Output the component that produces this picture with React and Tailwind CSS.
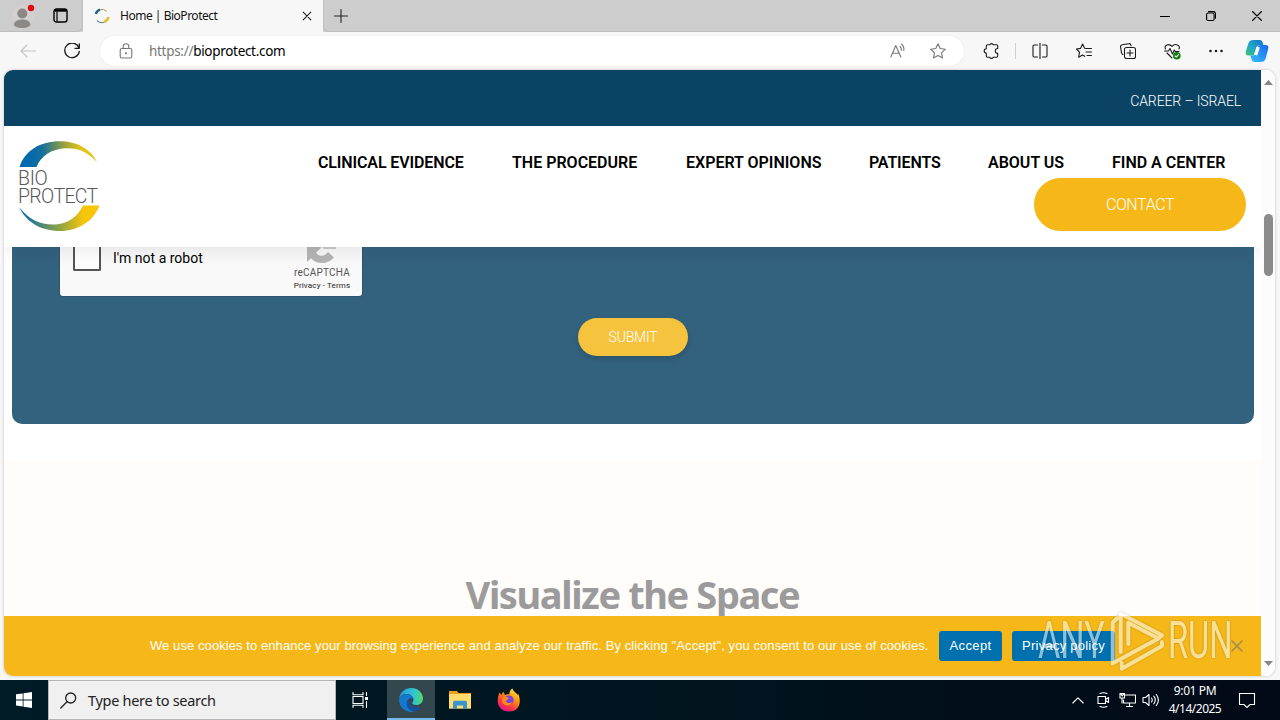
import React from 'react'

const NAV_ITEMS = [
  { label: 'CLINICAL EVIDENCE', className: 'w-[146px] tracking-[-0.12px]' },
  { label: 'THE PROCEDURE', className: 'w-[126px] tracking-[0px]' },
  { label: 'EXPERT OPINIONS', className: 'w-[135px] tracking-[0px]' },
  { label: 'PATIENTS', className: 'w-[71px] tracking-[-0.15px]' },
  { label: 'ABOUT US', className: 'w-[76px] tracking-[0px]' },
  { label: 'FIND A CENTER', className: 'w-[113px] tracking-[0px]' },
]

function Icon({ children, className, box = '0 0 16 16' }) {
  return (
    <svg className={`block flex-shrink-0 ${className}`} viewBox={box} fill="none" stroke="currentColor" strokeWidth={1.1} strokeLinecap="round" strokeLinejoin="round">
      {children}
    </svg>
  )
}

function TabStrip() {
  return (
    <div className="flex h-8 flex-shrink-0 bg-[#cdcdcd]">
      <div className="flex w-[83px] items-center rounded-br-md border-b border-r border-[#bdbdbd] pl-3">
        <svg className="block h-7 w-6" viewBox="0 0 24 28">
          <circle cx="11" cy="14" r="11" fill="#d3d0cf" />
          <circle cx="10.300" cy="11.500" r="5" fill="#8c8886" />
          <path d="M2 22.500c0-3.500 4-5 8.300-5s8 1.500 8 5c0 2-3.500 3.500-8 3.500s-8.300-1.500-8.300-3.500z" fill="#8c8886" />
          <circle cx="19" cy="6" r="3.200" fill="#e30613" />
        </svg>
        <Icon className="ml-[17px] h-[15px] w-[15px] text-black" box="0 0 15 15">
          <rect x="1" y="1" width="13" height="13" rx="2.500" strokeWidth={1.400} />
          <path d="M1.500 2.500h12" strokeWidth={2.400} strokeLinecap="butt" />
          <path d="M4 3.500v10" strokeWidth={1.200} strokeLinecap="butt" />
        </Icon>
      </div>
      <div className="flex w-60 items-center bg-[#f7f7f7] pl-[11px]">
        <svg className="block h-4 w-4" viewBox="0 0 16 16" fill="none" strokeLinecap="butt">
          <path d="M1.800 6A6.500 6.500 0 0 1 6 1.700" stroke="#24618c" strokeWidth="2.400" />
          <path d="M6 1.700A6.500 6.500 0 0 1 12.500 3.200" stroke="#9a9f42" strokeWidth="1" />
          <path d="M14.500 9a6.500 6.500 0 0 1-4.500 5" stroke="#dcc52c" strokeWidth="2.600" />
          <path d="M10 14.300a6.500 6.500 0 0 1-7-2" stroke="#69918b" strokeWidth="1.200" />
        </svg>
        <span className="ml-[10px] w-[182px] whitespace-nowrap text-[12px] leading-4 tracking-[-0.48px] text-[#111]">Home | BioProtect</span>
        <Icon className="h-[10px] w-[10px] text-[#222]" box="0 0 10 10">
          <path d="M1.200 1.200l7.600 7.600M8.800 1.200l-7.600 7.600" />
        </Icon>
      </div>
      <div className="flex flex-1 items-center rounded-bl-md border-b border-l border-[#bdbdbd] pl-[10px]">
        <Icon className="h-[14px] w-[14px] text-[#222]" box="0 0 14 14"><path d="M7 .5v13M.5 7h13" /></Icon>
      </div>
      <div className="flex items-center gap-[36px] border-b border-[#bdbdbd] pr-[18px] text-black">
        <Icon className="h-[10px] w-[10px]" box="0 0 10 10"><path d="M0 5.500h10" /></Icon>
        <Icon className="h-[10px] w-[10px]" box="0 0 10 10">
          <rect x=".6" y="2" width="7.500" height="7.500" rx="1.500" />
          <path d="M2.500.6h4.800a2.200 2.200 0 0 1 2.200 2.200v4.500" />
        </Icon>
        <Icon className="h-[10px] w-[10px]" box="0 0 10 10"><path d="M.5.5l9 9M9.500.5l-9 9" /></Icon>
      </div>
    </div>
  )
}

function Toolbar() {
  return (
    <div className="flex h-[38px] flex-shrink-0 items-center bg-[#f7f7f7] pl-5 text-[#1b1b1b]">
      <Icon className="h-4 w-4 text-[#c4c4c4]"><path d="M15.500 8H1M7 2L1 8l6 6" /></Icon>
      <Icon className="ml-7 h-4 w-4"><path d="M15 5A7.300 7.300 0 1 0 15.300 8.500M15.300.8v4.500h-4.300" strokeWidth={1.300} /></Icon>
      <div className="ml-[20px] flex h-[30px] w-[864px] items-center rounded-full bg-white pl-[19px] text-[#767676] shadow-[0_0_2px_#e4e4e4]">
        <Icon className="h-4 w-[14px]" box="0 0 14 16">
          <rect x="1.200" y="5.500" width="11.600" height="9.500" rx="1.800" />
          <path d="M4.200 5.500V3.500a2.800 2.800 0 0 1 5.600 0v2" />
          <circle cx="7" cy="10.200" r=".5" fill="currentColor" />
        </Icon>
        <span className="ml-4 flex-1 whitespace-nowrap text-[13.500px] leading-5 tracking-[-0.3px]">
          https://<span className="text-black">bioprotect.com</span>
        </span>
        <Icon className="mr-6 h-4 w-4">
          <path d="M.8 14L5.800 2.500 10.800 14M2.500 10.200h6.600M10 3.500a4 4 0 0 1 1.200 4M11.500 1a7 7 0 0 1 2.300 6.500" />
        </Icon>
        <Icon className="mr-[18px] h-4 w-4">
          <path d="M8 .8l2.200 4.700 5.100.7-3.700 3.600.9 5.200L8 12.500 3.500 15l.9-5.200L.7 6.200l5.100-.7z" />
        </Icon>
      </div>
      {/* puzzle piece: sockets on the right, knob on the left */}
      <Icon className="ml-[19px] h-4 w-4">
        <path d="M4.500 1.800h2.300a1.800 1.800 0 0 1 3.400 0h3.300c.7 0 1.200.5 1.200 1.200v2.500a2.200 2.200 0 0 0 0 4.800V13c0 .7-.5 1.200-1.200 1.200h-3.300a1.800 1.800 0 0 1-3.400 0H4.500c-.7 0-1.200-.5-1.200-1.200v-3a2 2 0 0 1 0-4.200V3c0-.7.5-1.200 1.200-1.200z" />
      </Icon>
      <div className="ml-[16px] h-4 w-px bg-[#cfcfcf]" />
      <Icon className="ml-4 h-4 w-4"><path d="M8 0v16M5.500 2H2.200C1.500 2 1 2.500 1 3.200v9.600c0 .7.500 1.200 1.200 1.200h3.300M10.500 2h3.300c.7 0 1.200.5 1.200 1.200v9.600c0 .7-.5 1.200-1.200 1.200h-3.300" /></Icon>
      <Icon className="ml-7 h-4 w-4"><path d="M9.500 5.500h6M10 9h5.500M11 12.500h4.500M8.600 5.300L6.600 1 4.500 5.400l-4 .6 3 3.200-.8 5L6.500 12l2.200 1.300" /></Icon>
      <Icon className="ml-7 h-4 w-4">
        <rect x="4.500" y="4.500" width="11" height="11" rx="2" />
        <path d="M10 7v6M7 10h6M3 11.500A2 2 0 0 1 1.500 9.800L.6 4a2 2 0 0 1 1.600-2.300l6.500-1A2 2 0 0 1 11 2.300v.5" />
      </Icon>
      <Icon className="ml-7 h-[17px] w-[17px]" box="0 0 17 17">
        <path d="M1.500 6C-.5 2 5 0 8 3.300 11 0 17 2 15 6M.5 8h4l1.500-2.500L8.500 11l1.800-4 1 1.500H15M3 10l5 5" />
        <circle cx="12.800" cy="12.800" r="3.800" fill="#107c10" stroke="none" />
        <path d="M11.200 13l1.200 1 2-2.300" stroke="white" />
      </Icon>
      <Icon className="ml-[27px] h-4 w-4"><path d="M2.500 8h.01M8 8h.01M13.500 8h.01" strokeWidth={2.600} /></Icon>
      <svg className="ml-[21px] block h-6 w-6 flex-shrink-0" viewBox="0 0 24 24">
        <defs>
          <linearGradient id="copL" x1="0" y1="1" x2="1" y2="0"><stop offset="0" stopColor="#3fc46c" /><stop offset=".45" stopColor="#22a6c9" /><stop offset="1" stopColor="#1473c9" /></linearGradient>
          <linearGradient id="copR" x1="0" y1="1" x2="1" y2="0"><stop offset="0" stopColor="#38bfff" /><stop offset="1" stopColor="#1668ec" /></linearGradient>
        </defs>
        <path d="M8.500 1h6c2 0 2.800 1.200 3.300 3l.6 2h-3c-2 0-3 1-3.600 3l-1.500 5c-.5 1.700-1.300 2.500-3 2.500H3.500C1 16.500.1 15 .9 12.300L3.500 4C4.200 1.900 5.800 1 8.500 1z" fill="url(#copL)" />
        <path d="M15.500 23h-6c-2 0-2.600-1.300-3.200-3.200l-1-3.300h2.500c2 0 2.500-1.200 3-2.800L12.300 9c.7-2.200 1.700-3 3.200-3h5c2.500 0 3.400 1.600 2.600 4.200L20.500 20c-.7 2-2.300 3-5 3z" fill="url(#copR)" />
        <path d="M13.200 8L10.600 16" stroke="#fff" strokeWidth="3.400" />
      </svg>
    </div>
  )
}

function Logo() {
  return (
    <div className="flex h-[91px] w-[82px] flex-shrink-0 flex-col text-[#58595b]">
      <svg className="block h-[26px] w-[82px] flex-shrink-0" viewBox="0 0 82 26">
        <defs>
          <linearGradient id="arcTop"><stop offset=".1" stopColor="#0069b0" /><stop offset=".3" stopColor="#16709a" /><stop offset=".6" stopColor="#a6a436" /><stop offset=".8" stopColor="#e3c51a" /></linearGradient>
          <linearGradient id="arcBottom"><stop offset="0" stopColor="#0069b0" /><stop offset=".5" stopColor="#8ca345" /><stop offset=".8" stopColor="#f9c50a" /></linearGradient>
        </defs>
        <path d="M1.500 26C7 9.500 22 .3 42 .3c17 0 31 7.500 37 21C69 10.500 60 6.800 48 7.300 33 8 23 15 18.500 26z" fill="url(#arcTop)" />
      </svg>
      <span className="mt-[3px] h-[18px] whitespace-nowrap font-[Roboto] text-[19.500px] font-light leading-[18px] tracking-[-0.3px]">BIO</span>
      <span className="h-[18px] whitespace-nowrap font-[Roboto] text-[19.500px] font-light leading-[17px] tracking-[-0.65px]">PROTECT</span>
      <svg className="block h-[27px] w-[82px] flex-shrink-0" viewBox="0 0 82 27">
        <path d="M1.500 2.500C11 15 24 20.500 38 19.500 51 18.500 60 11 65 .5h16.500C76 16 60 26 42 26 23 26 8 17 1.500 2.500z" fill="url(#arcBottom)" />
      </svg>
    </div>
  )
}

function SiteHeader() {
  return (
    <header className="relative z-10 flex h-[121px] flex-shrink-0 justify-between bg-white pl-[14px] pr-[15px] pt-[15px] font-[Roboto] shadow-[0_2px_20px_rgba(0,0,0,0.1)]">
      <Logo />
      <div className="flex flex-col items-end">
        <nav className="flex gap-12 pr-[21px] pt-[10px]">
          {NAV_ITEMS.map(item => (
            <a key={item.label} className={`whitespace-nowrap text-[16px] font-semibold leading-6 text-black ${item.className}`}>{item.label}</a>
          ))}
        </nav>
        <button className="mt-[3px] flex h-[53px] w-[212px] items-center justify-center rounded-full bg-[#f5b818] text-[16px] font-light tracking-[-0.4px] text-white">CONTACT</button>
      </div>
    </header>
  )
}

function Captcha() {
  return (
    <div className="ml-12 flex h-[49px] w-[302px] overflow-hidden rounded-b-[3px] bg-[#f9f9f9] pl-[13px] font-[Roboto] text-black shadow-[0_0_2px_rgba(0,0,0,0.4)]">
      <div className="h-6 w-7 rounded-b-[2px] border-x-2 border-b-2 border-[#555] bg-white" />
      <span className="ml-3 mt-[1px] flex-1 text-[14px] leading-5 tracking-[0px]">I'm not a robot</span>
      <div className="flex w-[80px] flex-col items-center text-[#555]">
        <svg className="block h-4 w-8 flex-shrink-0" viewBox="0 0 32 16">
          <path d="M1 0v15l4-3.800C8 14.500 12 16 16 16c5 0 9-2 12-5.500L22 5c-2 3-5 4.300-8 3.500-2-.5-3-1.500-4-3L15 1V0z" fill="#b5b5b5" />
          <path d="M16 0h14v2H18z" fill="#c9c9c9" />
        </svg>
        <span className="mt-[4px] whitespace-nowrap text-[10px] leading-3 tracking-[0.2px]">reCAPTCHA</span>
        <span className="whitespace-nowrap text-[8px] leading-[13px] tracking-[0.15px] text-[#222]">Privacy - Terms</span>
      </div>
    </div>
  )
}

function CookieBar() {
  return (
    <div className="flex h-[60px] flex-shrink-0 items-center bg-[#f6b819] pl-[146px] font-['Liberation_Sans'] text-[13px] text-white">
      <span className="w-[789px] flex-shrink-0 whitespace-nowrap tracking-[0.078px]">
        We use cookies to enhance your browsing experience and analyze our traffic. By clicking "Accept", you consent to our use of cookies.
      </span>
      <button className="h-[30px] w-[63px] flex-shrink-0 rounded-[3px] bg-[#0071ae] tracking-[0.4px]">Accept</button>
      <button className="ml-[10px] h-[30px] w-[103px] flex-shrink-0 rounded-[3px] bg-[#0071ae] tracking-[0.25px]">Privacy policy</button>
      <Icon className="ml-[116px] h-3 w-3 text-[#a18b53]" box="0 0 12 12"><path d="M1 1l10 10M11 1L1 11" strokeWidth={1.600} /></Icon>
    </div>
  )
}

function Watermark() {
  return (
    <div className="absolute left-[1034px] top-[605px] h-[70px] w-[200px] font-[Roboto] text-white opacity-55 drop-shadow-[0_0_1px_rgba(0,0,0,0.4)]">
      <span className="absolute left-[4px] top-[10px] origin-left scale-x-[0.67] text-[51px] leading-[52px]">ANY</span>
      <svg className="absolute left-[74px] top-[1px] h-[68px] w-[58px]" viewBox="0 0 58 68" fill="none" stroke="currentColor" strokeWidth="4" strokeLinejoin="round" strokeLinecap="round">
        <path d="M4.700 57.500V16.700L9.300 12M12.700 46V7.700L54 29.300 50.500 32.500 20.300 16.700V38M5.300 57L50.500 32.500M13.700 62.700L54 40V36M13.700 62.700V57" />
      </svg>
      <span className="absolute left-[134px] top-[10px] origin-left scale-x-[0.64] text-[51px] leading-[52px]">RUN</span>
    </div>
  )
}

function Page() {
  return (
    <div className="flex min-h-0 flex-1 px-1">
      <div className="flex h-[606px] w-[1271px] overflow-hidden rounded-[9px] bg-white shadow-[0_0_3px_#bbb]">
        <main className="flex w-[1257px] flex-col overflow-hidden">
          <div className="relative z-20 flex h-14 flex-shrink-0 items-center justify-end bg-[#0a4364] pr-[20px] pt-[6px] font-[Roboto] text-[14px] font-light tracking-[-0.12px] text-white">
            CAREER – ISRAEL
          </div>
          <SiteHeader />
          <section className="mx-2 mr-[7px] flex h-[177px] flex-shrink-0 flex-col rounded-b-[10px] bg-[#33627f]">
            <Captcha />
            <button className="mt-[22px] h-[38px] w-[110px] self-center rounded-full bg-[#f6c33e] font-[Roboto] text-[14px] font-light tracking-[-0.2px] text-white shadow-[0_3px_6px_rgba(0,0,0,0.16)]">SUBMIT</button>
          </section>
          <section className="mt-[37px] flex h-[155px] flex-shrink-0 items-end justify-center overflow-hidden bg-[#fffcf9]">
            <h2 className="h-[45px] whitespace-nowrap font-['Noto_Sans'] text-[38px] font-bold leading-[46px] tracking-[-1.4px] text-[#9b9b9b]">Visualize the Space</h2>
          </section>
          <CookieBar />
        </main>
        <div className="flex w-[14px] flex-col items-center bg-[#fcfcfc] pt-[9px] pb-[9px]">
          <svg className="block h-[6px] w-[9px]" viewBox="0 0 9 6"><path d="M4.500 1L9 6H0z" fill="#858585" /></svg>
          <div className="mt-[129px] h-[62px] w-[9px] rounded-full bg-[#8b8b8b]" />
          <svg className="mt-auto block h-[6px] w-[9px]" viewBox="0 0 9 6"><path d="M4.500 5L9 0H0z" fill="#858585" /></svg>
        </div>
      </div>
    </div>
  )
}

function Taskbar() {
  return (
    <div className="flex h-10 flex-shrink-0 items-center bg-gradient-to-r from-[#001b26] via-[#00151f] to-[#020917] text-white">
      <div className="flex h-10 w-12 items-center justify-center">
        <svg className="block h-4 w-4" viewBox="0 0 16 16" fill="#fff"><path d="M0 2.300l6.700-.9v6.100H0zM7.500 1.200L16 0v7.500H7.500zM0 8.400h6.700v6.100L0 13.600zM7.500 8.400H16V16l-8.500-1.200z" /></svg>
      </div>
      <div className="flex h-10 w-72 items-center border border-[#b5b5b5] bg-[#f0f0f0] pl-[11px] text-[#222]">
        <Icon className="h-[17px] w-[17px]" box="0 0 17 17"><circle cx="10.700" cy="6" r="5" strokeWidth={1.300} /><path d="M7 9.700L.8 16" strokeWidth={1.300} /></Icon>
        <span className="ml-[11px] mt-px whitespace-nowrap text-[14.500px] tracking-[-0.3px]">Type here to search</span>
      </div>
      <div className="flex h-10 w-[51px] items-center justify-center pr-1">
        <Icon className="h-4 w-4"><path d="M1 .5v2.200h10V.5M1 15.500v-2.200h10v2.200M1 4.500h10v7H1zM14.500.5v3M14.500 9.500v6" strokeLinejoin="miter" /><path d="M14.500 5v3" strokeWidth={3} strokeLinecap="butt" /></Icon>
      </div>
      <div className="flex h-10 w-12 flex-col items-center justify-center border-b-2 border-[#76b9ed] bg-[#33474f] pt-px">
        <svg className="block h-6 w-6" viewBox="0 0 24 24">
          <defs>
            <linearGradient id="edgeTop"><stop offset="0" stopColor="#2494df" /><stop offset=".6" stopColor="#2fc4d6" /><stop offset="1" stopColor="#55d96b" /></linearGradient>
          </defs>
          <path d="M0 11C1 4 6 0 12.200 0 19 0 24 5 24 10.500c0 4-3 6.500-6.500 6.500-2.800 0-4.300-1-4.300-2 0-.8 1.300-1 1.300-3.300C14.500 8 10.500 6 7 6 4 6 1 8 0 11z" fill="url(#edgeTop)" />
          <path d="M0 11.500C1.500 8 4 6.200 7 6.200c3.800 0 6.800 2.300 7.200 5-2-2-6.500-.5-6.500 4.300 0 5 4.500 8 8.300 7.700A12 12 0 0 1 0 11.500z" fill="#1379ce" />
          <path d="M8.300 12.500c-1.800 4.500 1 10 7.500 10.700 3-.8 5-2.400 6.400-4.700-5 2.500-12.500.5-11.500-6-1 .3-1.800.4-2.400 0z" fill="#15519a" />
        </svg>
      </div>
      <div className="flex h-10 w-[49px] items-center justify-center">
        <svg className="block h-5 w-[22px]" viewBox="0 0 22 20">
          <path d="M0 1h8l1.500 2H22v15.500H0z" fill="#e7a11f" />
          <path d="M0 4h22v14.500H0z" fill="#ffdc6c" />
          <path d="M4 19v-6.500c0-1 .7-1.700 1.700-1.700h10.600c1 0 1.700.7 1.700 1.700V19h-4v-3.500H8V19z" fill="#3b93d0" />
        </svg>
      </div>
      <div className="flex h-10 w-[49px] items-center justify-center">
        <svg className="block h-6 w-6" viewBox="0 0 24 24">
          <defs><linearGradient id="fox" x1=".9" y1="0" x2=".3" y2="1"><stop offset="0" stopColor="#fff44f" /><stop offset=".4" stopColor="#ff980e" /><stop offset=".75" stopColor="#ff3647" /><stop offset="1" stopColor="#e31587" /></linearGradient></defs>
          <path d="M2.500 4.500l2 2.500C5 5.500 5.500 4.500 6.500 4l1.500 3c2-1 3.500-1 4.500-.5C12 4 13.500 1.500 15.500.5c.5 3 4 4 5 6.500l.5-1.500c3.500 7 2.500 18-9 18C4.500 23.500.5 18 .7 12.500c0-3 .8-5.500 1.800-8z" fill="url(#fox)" />
          <circle cx="12" cy="12" r="4.600" fill="#7542e5" />
          <path d="M6 9.500c3-1 5 0 6.500 1-2 .3-2.500 2-4 2.500 1 2 4 3 6.500 1-1 5-9.500 4.500-10-1z" fill="#ff8a16" />
        </svg>
      </div>
      <div className="ml-auto flex items-center">
        <Icon className="h-3 w-3" box="0 0 12 12"><path d="M.8 9L6 3.800 11.200 9" /></Icon>
        <Icon className="ml-[13px] h-4 w-[13px]" box="0 0 13 16"><path d="M3 1.500q3.500-1.500 7 0M3 14.500q3.500 1.500 7 0M1 4.500h7.500v7H1zM8.500 7.500l3-2v5l-3-2" /></Icon>
        <Icon className="ml-[9px] h-4 w-[17px]" box="0 0 17 16"><path d="M6.500 3h10v8H4.500V8M10.500 11v3.500M7.500 14.500h6M1 1.500h4.500v4.500H1zM3 6v5" strokeLinejoin="miter" /><path d="M1.500 2h3.500l-1.700 2z" /></Icon>
        <Icon className="ml-[6px] h-4 w-[18px]" box="0 0 18 16"><path d="M1 5.500h2.500L7 2.500v11l-3.500-3H1zM9.500 6q1.500 2 0 4M11.800 4.200q3 3.800 0 7.600M14.300 2.500q4.200 5.500 0 11" /></Icon>
        <div className="ml-[5px] flex w-[60px] flex-col items-center whitespace-nowrap text-[12px] leading-[18px]">
          <span className="tracking-[-0.4px]">9:01 PM</span>
          <span className="tracking-[-0.5px]">4/14/2025</span>
        </div>
        <Icon className="ml-[13px] mr-6 h-[17px] w-[18px]" box="0 0 18 17"><path d="M1.500 1.500h15v11H12l-3 3-3-3H1.500z" strokeLinejoin="miter" /></Icon>
      </div>
    </div>
  )
}

export default function App() {
  return (
    <div className="relative flex h-[720px] w-[1280px] flex-col overflow-hidden bg-[#f7f7f7] font-['Noto_Sans',sans-serif]">
      <TabStrip />
      <Toolbar />
      <Page />
      <Taskbar />
      <Watermark />
    </div>
  )
}
